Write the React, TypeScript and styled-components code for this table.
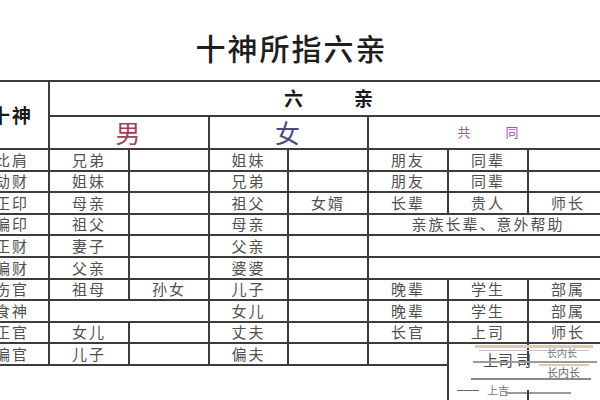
import React from "react"
import styled, { createGlobalStyle } from "styled-components"

const GlobalStyle = createGlobalStyle`
    html, body {
        margin: 0;
        padding: 0;
        background: #ffffff;
        overflow: hidden;
    }
    body {
        font-family: "Noto Sans CJK SC", "Noto Sans", sans-serif;
    }
`

const Page = styled.div`
    width: 600px;
    height: 400px;
    overflow: hidden;
    background: #ffffff;
`

// the sheet is a bit wider than the window and starts left of it
const Sheet = styled.div`
    position: relative;
    width: 633px;
    margin-left: -26px;
`

const Title = styled.h1`
    margin: 0;
    padding-top: 29px;
    height: 51px;
    line-height: 36px;
    font-size: 30px;
    font-weight: 500;
    letter-spacing: 2px;
    text-indent: 2px;
    text-align: center;
    color: #1e1e1e;
`

const Grid = styled.table`
    width: 633px;
    table-layout: fixed;
    border-collapse: collapse;
    border-top: 2px solid #777;
`

type Tone = "data" | "head" | "male" | "female" | "common"

const toneColor: Record<Tone, string> = {
    data: "#505050",
    head: "#1a1a1a",
    male: "#9d4252",
    female: "#4a4a7c",
    common: "#b845c4",
}

const toneSize: Record<Tone, string> = {
    data: "15px",
    head: "19px",
    male: "25px",
    female: "25px",
    common: "13px",
}

const Cell = styled.td<{ $tone?: Tone; $open?: boolean }>`
    padding: 0;
    border: 2px solid #3c3c3c;
    ${(p) => (p.$open ? "border-right: none; border-bottom: none;" : "")}
    text-align: center;
    vertical-align: middle;
    white-space: nowrap;
    line-height: 1.1;
    font-size: ${(p) => toneSize[p.$tone ?? "data"]};
    font-weight: ${(p) => (p.$tone === "head" ? 700 : 400)};
    color: ${(p) => toneColor[p.$tone ?? "data"]};
    letter-spacing: 2px;
`

const Spaced = styled.span<{ $gap: number }>`
    letter-spacing: ${(p) => p.$gap}px;
    margin-right: -${(p) => p.$gap}px;
`

const HeadRow = styled.tr<{ $h: number }>`
    height: ${(p) => p.$h}px;
`

const Row = styled.tr`
    height: 21.6px;
`

// smeared, half-overwritten text in the lower right of the scan
const Glitch = styled.div`
    position: absolute;
    left: 473px;
    top: 344px;
    width: 160px;
    height: 56px;
    pointer-events: none;
`

const Smear = styled.div<{ $x: number; $y: number; $w: number; $c: string; $h?: number }>`
    position: absolute;
    left: ${(p) => p.$x}px;
    top: ${(p) => p.$y}px;
    width: ${(p) => p.$w}px;
    height: ${(p) => p.$h ?? 2}px;
    background: ${(p) => p.$c};
`

const Ghost = styled.span<{ $x: number; $y: number; $s: number; $c?: string }>`
    position: absolute;
    left: ${(p) => p.$x}px;
    top: ${(p) => p.$y}px;
    font-size: ${(p) => p.$s}px;
    line-height: 1;
    color: ${(p) => p.$c ?? "#4a4a4a"};
    white-space: nowrap;
`

const Stem = styled.div<{ $x: number; $y: number; $h: number }>`
    position: absolute;
    left: ${(p) => p.$x}px;
    top: ${(p) => p.$y}px;
    width: 2px;
    height: ${(p) => p.$h}px;
    background: #3c3c3c;
`

const rows: string[][] = [
    ["比肩", "兄弟", "", "姐妹", "", "朋友", "同辈", ""],
    ["劫财", "姐妹", "", "兄弟", "", "朋友", "同辈", ""],
    ["正印", "母亲", "", "祖父", "女婿", "长辈", "贵人", "师长"],
]

const lower: string[][] = [
    ["伤官", "祖母", "孙女", "儿子", "", "晚辈", "学生", "部属"],
]

export default function App() {
    return (
        <Page>
            <GlobalStyle />
            <Sheet>
                <Title>十神所指六亲</Title>
                <Grid>
                    <colgroup>
                        <col style={{ width: 74 }} />
                        <col style={{ width: 80 }} />
                        <col style={{ width: 80 }} />
                        <col style={{ width: 79 }} />
                        <col style={{ width: 80 }} />
                        <col style={{ width: 80 }} />
                        <col style={{ width: 80 }} />
                        <col style={{ width: 80 }} />
                    </colgroup>
                    <tbody>
                        <HeadRow $h={35}>
                            <Cell $tone="head" rowSpan={2}>十神</Cell>
                            <Cell $tone="head" colSpan={7}>
                                <Spaced $gap={51}>六亲</Spaced>
                            </Cell>
                        </HeadRow>
                        <HeadRow $h={33}>
                            <Cell $tone="male" colSpan={2}>男</Cell>
                            <Cell $tone="female" colSpan={2}>女</Cell>
                            <Cell $tone="common" colSpan={3}>
                                <Spaced $gap={35}>共同</Spaced>
                            </Cell>
                        </HeadRow>
                        {rows.map((r) => (
                            <Row key={r[0]}>
                                {r.map((t, i) => <Cell key={i}>{t}</Cell>)}
                            </Row>
                        ))}
                        <Row>
                            <Cell>偏印</Cell>
                            <Cell>祖父</Cell>
                            <Cell />
                            <Cell>母亲</Cell>
                            <Cell />
                            <Cell colSpan={3}>亲族长辈、意外帮助</Cell>
                        </Row>
                        <Row>
                            <Cell>正财</Cell>
                            <Cell>妻子</Cell>
                            <Cell />
                            <Cell>父亲</Cell>
                            <Cell />
                            <Cell colSpan={3} />
                        </Row>
                        <Row>
                            <Cell>偏财</Cell>
                            <Cell>父亲</Cell>
                            <Cell />
                            <Cell>婆婆</Cell>
                            <Cell />
                            <Cell colSpan={3} />
                        </Row>
                        {lower.map((r) => (
                            <Row key={r[0]}>
                                {r.map((t, i) => <Cell key={i}>{t}</Cell>)}
                            </Row>
                        ))}
                        <Row>
                            <Cell>食神</Cell>
                            <Cell colSpan={2} />
                            <Cell>女儿</Cell>
                            <Cell />
                            <Cell>晚辈</Cell>
                            <Cell>学生</Cell>
                            <Cell>部属</Cell>
                        </Row>
                        <Row>
                            <Cell>正官</Cell>
                            <Cell>女儿</Cell>
                            <Cell />
                            <Cell>丈夫</Cell>
                            <Cell />
                            <Cell>长官</Cell>
                            <Cell>上司</Cell>
                            <Cell>师长</Cell>
                        </Row>
                        <Row>
                            <Cell>偏官</Cell>
                            <Cell>儿子</Cell>
                            <Cell />
                            <Cell>偏夫</Cell>
                            <Cell />
                            <Cell />
                            <Cell $open />
                            <Cell $open />
                        </Row>
                    </tbody>
                </Grid>
                <Glitch>
                    <Smear $x={28} $y={1} $w={118} $c="#dccba8" $h={3} />
                    <Smear $x={32} $y={6} $w={110} $c="#c4c4c4" $h={1} />
                    <Ghost $x={36} $y={8} $s={15}>上司 司</Ghost>
                    <Ghost $x={100} $y={4} $s={10} $c="#777">长内长</Ghost>
                    <Smear $x={26} $y={17} $w={124} $c="#9a9a9a" />
                    <Smear $x={92} $y={20} $w={50} $c="#dccba8" $h={2} />
                    <Ghost $x={100} $y={23} $s={11} $c="#666">长内长</Ghost>
                    <Smear $x={24} $y={34} $w={120} $c="#8a8a8a" />
                    <Smear $x={10} $y={46} $w={22} $c="#666" $h={1} />
                    <Ghost $x={40} $y={41} $s={11} $c="#777">上吉</Ghost>
                    <Smear $x={58} $y={48} $w={66} $c="#9a9a9a" $h={2} />
                    <Stem $x={0} $y={20} $h={40} />
                    <Stem $x={80} $y={46} $h={14} />
                </Glitch>
            </Sheet>
        </Page>
    )
}
